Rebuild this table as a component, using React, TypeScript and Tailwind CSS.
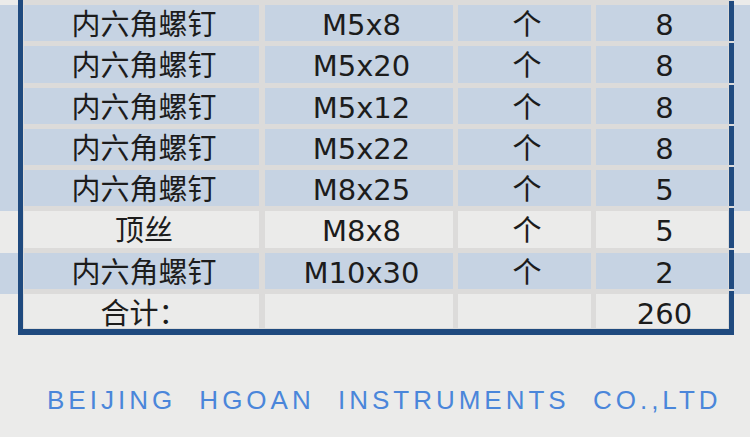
import React from 'react';

const BLUE = 'bg-[#c6d3e3]';
const LIGHT = 'bg-[#ebebea]';

interface Row {
  name: string;
  spec: string;
  unit: string;
  qty: string;
  blue: boolean;
}

const rows: Row[] = [
  { name: '内六角螺钉', spec: 'M5x8', unit: '个', qty: '8', blue: true },
  { name: '内六角螺钉', spec: 'M5x20', unit: '个', qty: '8', blue: true },
  { name: '内六角螺钉', spec: 'M5x12', unit: '个', qty: '8', blue: true },
  { name: '内六角螺钉', spec: 'M5x22', unit: '个', qty: '8', blue: true },
  { name: '内六角螺钉', spec: 'M8x25', unit: '个', qty: '5', blue: true },
  { name: '顶丝', spec: 'M8x8', unit: '个', qty: '5', blue: false },
  { name: '内六角螺钉', spec: 'M10x30', unit: '个', qty: '2', blue: true },
];

const font = { fontFamily: '"DejaVu Sans", "Noto Sans CJK SC", sans-serif' };

function Cell({ w, blue, children }: { w: string; blue: boolean; children?: React.ReactNode }) {
  return (
    <div
      className={`${w} h-full text-center text-[29px] leading-[31px] pt-[5px] text-[#1c1c1c] pl-[5px] whitespace-nowrap ${
        blue ? BLUE : LIGHT
      }`}
    >
      {children}
    </div>
  );
}

function Cells({ r, blue }: { r: { name: string; spec: string; unit: string; qty: string }; blue: boolean }) {
  return (
    <div className="flex h-full pl-px gap-[5px]">
      <Cell w="w-[235px] mr-px" blue={blue}>{r.name}</Cell>
      <Cell w="w-[188px]" blue={blue}>{r.spec}</Cell>
      <Cell w="w-[133px]" blue={blue}>{r.unit}</Cell>
      <Cell w="w-[132px]" blue={blue}>{r.qty}</Cell>
    </div>
  );
}

export default function App() {
  return (
    <div className="w-[750px] h-[437px] overflow-hidden bg-[#ebebea]" style={font}>
      {/* top sliver of previous row */}
      <div className="flex h-[5px] bg-[#ebebea]">
        <div className="w-[18px]" />
        <div className="w-[5px] bg-[#1f4a7f]" />
        <div className="w-[706px] bg-[#dcdbda]" />
        <div className="w-[5px] flex flex-col">
          <div className="h-px bg-[#dcdbda]" />
          <div className="flex-1 bg-[#1f4a7f]" />
        </div>
        <div className="flex-1" />
      </div>

      {rows.map((r, i) => (
        <div key={i} className={`flex h-[41.25px] ${r.blue ? BLUE : LIGHT}`}>
          <div className="w-[18px]" />
          <div className="w-[5px] bg-[#1f4a7f]" />
          <div className="w-[706px] flex flex-col bg-[#dcdbda]">
            <div className="h-[36.25px]">
              <Cells r={r} blue={r.blue} />
            </div>
          </div>
          <div className="w-[5px] flex flex-col">
            <div className="h-[36.25px] bg-[#1f4a7f]" />
            <div className="h-[2px] bg-[#dcdbda]" />
            <div className="flex-1 bg-[#1f4a7f]" />
          </div>
          <div className="flex-1" />
        </div>
      ))}

      {/* total row */}
      <div className="flex h-[35.25px] bg-[#ebebea]">
        <div className="w-[18px]" />
        <div className="w-[5px] bg-[#1f4a7f]" />
        <div className="w-[706px] bg-[#dcdbda] pb-px">
          <Cells r={{ name: '合计：', spec: '', unit: '', qty: '260' }} blue={false} />
        </div>
        <div className="w-[5px] bg-[#1f4a7f]" />
        <div className="flex-1" />
      </div>
      <div className="flex h-[6px]">
        <div className="w-[18px]" />
        <div className="w-[716px] bg-[#1f4a7f]" />
      </div>

      {/* footer */}
      <div
        className="mt-[52px] pl-[47px] text-[26px] leading-[26px] tracking-[4px] [word-spacing:12px] text-[#4a86da] whitespace-nowrap"
        style={{ fontFamily: '"Liberation Sans", Arial, sans-serif' }}
      >
        BEIJING HGOAN INSTRUMENTS CO.,LTD
      </div>
    </div>
  );
}
